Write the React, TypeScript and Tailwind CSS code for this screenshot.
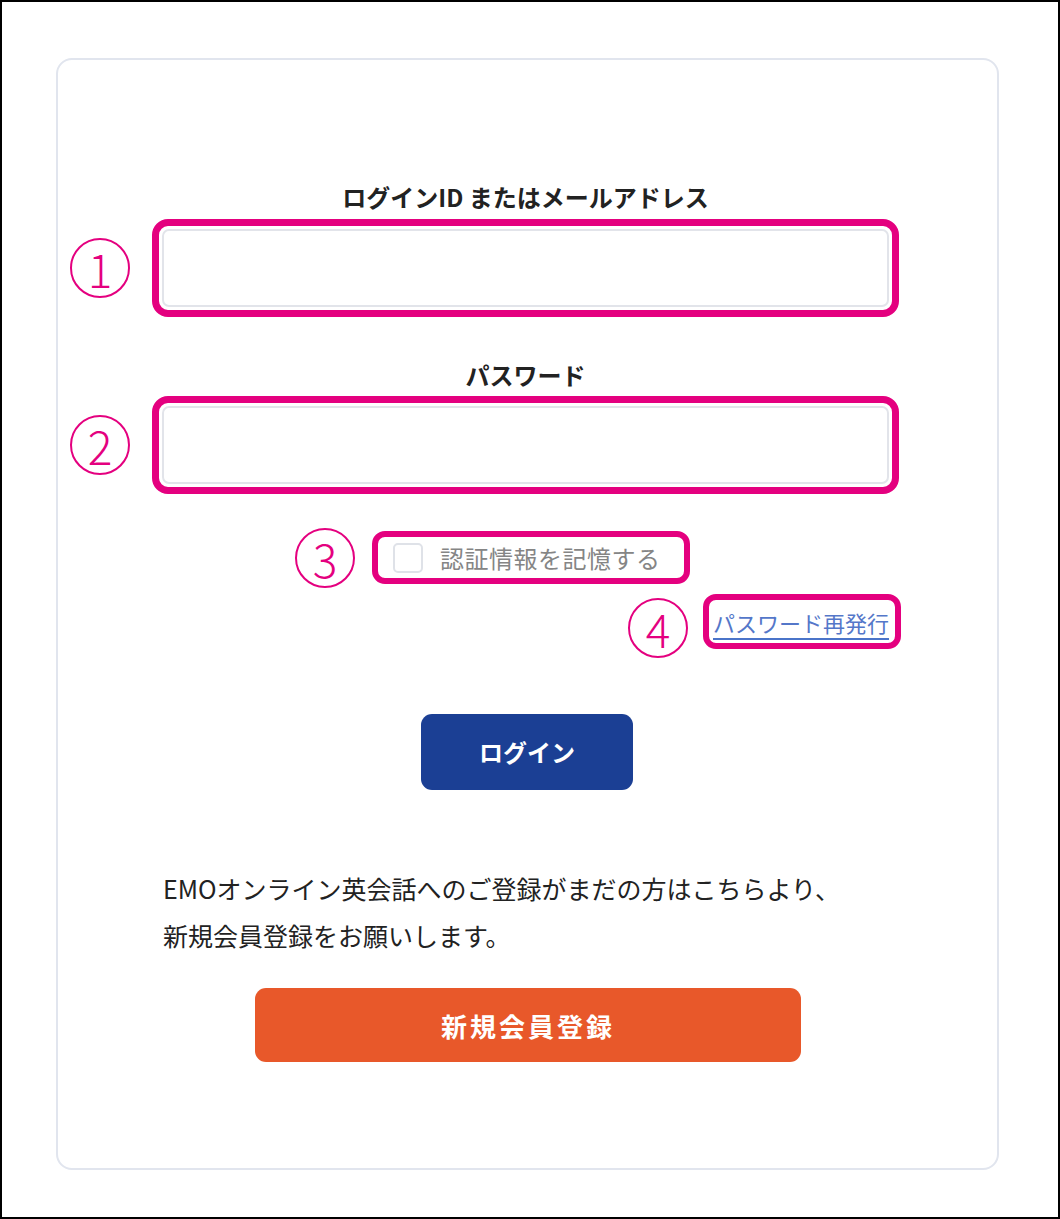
import React from 'react';

const FONT = { fontFamily: '"Noto Sans CJK JP", "Noto Sans", sans-serif' };

const Marker = ({ n, className }: { n: number; className: string }) => (
  <span
    className={`absolute top-1/2 -translate-y-1/2 flex h-[60px] w-[60px] items-center justify-center rounded-full border-2 border-[#e4007f] text-[46px] font-light leading-none text-[#e4007f] ${className}`}
  >
    {n}
  </span>
);

const Field = ({ n, type }: { n: number; type: string }) => (
  <div className="relative h-[98px] w-full rounded-[16px] border-[7px] border-[#e4007f] p-[3px]">
    <Marker n={n} className="right-full mr-[29px]" />
    <input
      type={type}
      className="h-full w-full rounded-[7px] border-2 border-[#e2e4ea] bg-white outline-none"
    />
  </div>
);

export default function App() {
  return (
    <div className="h-[1219px] w-[1060px] border-2 border-black bg-white" style={FONT}>
      <div className="ml-[54px] mt-[56px] h-[1112px] w-[943px] rounded-[16px] border-2 border-[#e1e5ee] pl-[94px]">
        <div className="flex w-[747px] flex-col">
          <label className="mt-[119px] h-[36px] text-center text-[24px] font-bold leading-[36px] text-[#222]">
            ログインID またはメールアドレス
          </label>
          <div className="mt-[4px]">
            <Field n={1} type="text" />
          </div>

          <label className="mt-[40px] h-[36px] text-center text-[24px] font-bold leading-[36px] text-[#222]">
            パスワード
          </label>
          <div className="mt-[3px]">
            <Field n={2} type="password" />
          </div>

          <div className="relative ml-[220px] mt-[37px] flex h-[53px] w-[318px] items-center rounded-[13px] border-[6px] border-[#e4007f] pl-[15px]">
            <Marker n={3} className="right-full mr-[23px]" />
            <span className="h-[30px] w-[30px] rounded-[5px] border-2 border-[#dfe2e8] bg-white" />
            <span className="ml-[17px] text-[24px] leading-none tracking-[0.5px] text-[#858585]">
              認証情報を記憶する
            </span>
          </div>

          <div className="relative ml-[551px] mt-[10px] flex h-[55px] w-[198px] items-center rounded-[13px] border-[6px] border-[#e4007f] pl-[4px]">
            <Marker n={4} className="right-full mr-[21px] mt-[6px]" />
            <a
              href="#"
              className="text-[22px] leading-none text-[#5477c9] underline decoration-[#4a74c9] decoration-2 underline-offset-[6px]"
            >
              パスワード再発行
            </a>
          </div>

          <button className="ml-[269px] mt-[65px] h-[76px] w-[212px] rounded-[11px] bg-[#1b3f94] text-[24px] font-bold text-white">
            ログイン
          </button>

          <p className="ml-[11px] mt-[75px] text-[25px] leading-[47px] text-[#222]">
            EMOオンライン英会話へのご登録がまだの方はこちらより、
            <br />
            新規会員登録をお願いします。
          </p>

          <button className="ml-[103px] mt-[29px] h-[74px] w-[546px] rounded-[11px] bg-[#e8582a] text-[26px] font-bold tracking-[3px] text-white">
            新規会員登録
          </button>
        </div>
      </div>
    </div>
  );
}
